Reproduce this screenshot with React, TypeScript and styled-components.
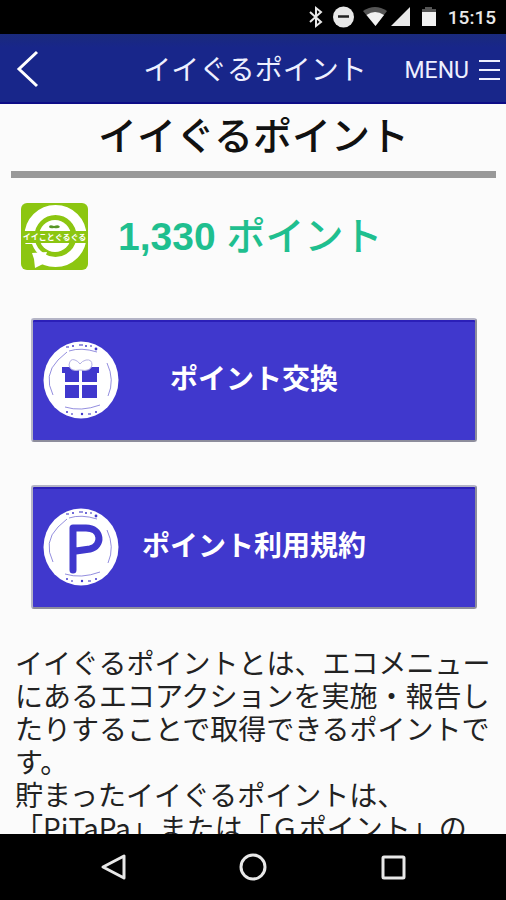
import React from "react";
import styled, { createGlobalStyle } from "styled-components";

const GlobalStyle = createGlobalStyle`
  *, *::before, *::after { box-sizing: border-box; }
  body {
    margin: 0;
    background: #fbfbfb;
    font-family: Roboto, "Noto Sans CJK JP", sans-serif;
  }
  button { font-family: inherit; cursor: pointer; }
`;

const Screen = styled.div`
  display: flex;
  flex-direction: column;
  height: 100vh;
  overflow: hidden;
`;

const StatusBar = styled.div`
  flex: none;
  display: flex;
  align-items: center;
  justify-content: flex-end;
  height: 34px;
  padding-right: 10px;
  background: #000;
  color: #e8e8e8;
  font-size: 19px;
  font-weight: 500;
`;

const StatusIcons = styled.svg`
  display: block;
  margin-right: 10px;
`;

const Header = styled.header`
  flex: none;
  display: grid;
  grid-template-columns: 1fr auto 1fr;
  align-items: center;
  height: 70px;
  padding: 2px 6px 0 10px;
  background: linear-gradient(#1a2a7c, #18268a 20%, #18268a);
  border-bottom: 2px solid #0c0c86;
  color: #fff;
`;

const HeaderTitle = styled.div`
  padding-top: 4px;
  font-size: 28px;
  line-height: 40px;
  color: #eef0ff;
`;

const BackButton = styled.button`
  display: flex;
  justify-self: start;
  padding: 0;
  border: 0;
  background: none;
`;

const MenuButton = styled.button`
  display: flex;
  align-items: center;
  justify-self: end;
  gap: 10px;
  padding: 2px 0 0;
  border: 0;
  background: none;
  color: #eef0ff;
  font-size: 23px;
`;

const Content = styled.main`
  flex: 1;
  min-height: 0;
  overflow: hidden;
  padding: 0 10px 0 11px;
  background: #fbfbfb;
`;

const PageTitle = styled.h1`
  margin: 0;
  padding: 9px 0 10px;
  border-bottom: 7px solid #999;
  color: #111;
  font-size: 39px;
  line-height: 48px;
  font-weight: 500;
  text-align: center;
`;

const Balance = styled.section`
  display: flex;
  align-items: center;
  gap: 30px;
  padding: 25px 10px 0;
`;

const Points = styled.p`
  margin: 0;
  color: #1fbf8f;
  font-family: "Liberation Sans", "Noto Sans CJK JP", sans-serif;
  font-size: 39px;
  line-height: 64px;
  font-weight: 700;
`;

const PointsUnit = styled.span`
  font-weight: 500;
`;

const Actions = styled.div`
  display: flex;
  flex-direction: column;
  gap: 43px;
  padding: 48px 19px 0 20px;
`;

const ActionButton = styled.button`
  display: grid;
  grid-template-columns: 1fr auto 1fr;
  align-items: center;
  height: 124px;
  padding: 0 10px;
  border: 2px solid;
  border-color: #b4b4c6 #8d8d9c #8d8d9c #b4b4c6;
  border-radius: 3px;
  background: #4038cd;
  box-shadow: inset 0 2px 0 #2b1fb8;
  color: #fff;
  font-size: 28px;
  line-height: 40px;
  font-weight: 700;
`;

const Description = styled.p`
  margin: 0;
  padding: 37px 0 0 4px;
  color: #222;
  font-family: "Noto Sans CJK JP", sans-serif;
  font-size: 28px;
  line-height: 33px;
  font-weight: 400;
`;

const NavBar = styled.nav`
  flex: none;
  display: flex;
  align-items: center;
  justify-content: center;
  gap: 100px;
  height: 66px;
  background: #000;
`;

const NavButton = styled.button`
  display: flex;
  padding: 5px;
  border: 0;
  background: none;
`;

function StatusGlyphs() {
  return (
    <StatusIcons width="130" height="24" viewBox="308 6 130 24" aria-hidden="true">
      <path d="M310 13l11 10-5 4V9l5 4-11 10" fill="none" stroke="#e8e8e8" strokeWidth="2" />
      <circle cx="343.500" cy="18" r="10.500" fill="#e8e8e8" />
      <path d="M338 17.500h11" stroke="#222" strokeWidth="2.500" />
      <path d="M363 12Q375 4 387 12L375.500 27Z" fill="#555" />
      <path d="M366.500 16Q375 10 384 16L375.500 27Z" fill="#f2f2f2" />
      <path d="M410 8v19h-19z" fill="#e8e8e8" />
      <path d="M425 8h7v2h4v5h-14v-5h3z" fill="#555" />
      <path d="M422 13h14v14h-14z" fill="#f2f2f2" />
    </StatusIcons>
  );
}

function EcoLogo() {
  return (
    <svg width="67" height="67" viewBox="0 0 67 67" role="img" aria-label="イイことぐるぐる">
      <rect width="67" height="67" rx="6" fill="#8cc611" />
      <circle cx="34.500" cy="33" r="26" fill="none" stroke="#fff" strokeWidth="10" />
      <circle cx="34" cy="33" r="16" fill="#fff" />
      <path d="M2 41h9q3 8 9 12l-9 8-9-8z" fill="#8cc611" />
      <path d="M11 50l15-1-2 6 3 4-7 3-6 3-1-9z" fill="#fff" />
      <rect y="28" width="67" height="12" fill="#8cc611" />
      <path d="M28 24q0-3 5-1 5-2 6 1-2 2-6 1-4 1-5-1z" fill="#579526" />
      <text
        x="33.500"
        y="37"
        textAnchor="middle"
        fontFamily="Noto Sans CJK JP, sans-serif"
        fontWeight="700"
        fontSize="8"
        fill="#fff"
      >
        イイことぐるぐる
      </text>
    </svg>
  );
}

function Medallion({ children }: { children: React.ReactNode }) {
  return (
    <svg width="76" height="78" viewBox="0 0 76 78" aria-hidden="true">
      <ellipse cx="38" cy="39" rx="37.500" ry="38.500" fill="#fff" />
      <g fill="none" stroke="#7771d6">
        <path d="M10 54Q0 34 15 19L24 11M64 22Q72 39 65 55M26 10Q38 6 54 11M22 66Q38 71 57 64" strokeWidth="0.800" />
        <path d="M23 6h3M36 4h4M47 5h2M28 73h2M45 73h3" strokeWidth="1.500" />
      </g>
      <g fill="#4038cd">
        <circle cx="30" cy="5" r="1" />
        <circle cx="43" cy="5" r="1" />
        <circle cx="53" cy="8" r="1.400" />
        <circle cx="24" cy="71" r="1" />
        <circle cx="39" cy="73" r="1.200" />
        <circle cx="53" cy="71" r="1" />
      </g>
      {children}
    </svg>
  );
}

function GiftIcon() {
  return (
    <Medallion>
      <g fill="#4038cd">
        <path d="M19 26h37v6h-2v9H39V27h-3v14H22v-9h-3z" />
        <path d="M22 44h14v13H22zM39 44h15v13H39z" />
      </g>
      <path
        d="M37 29Q27 31 26 24q1-7 6-5 3 1 5 4 2-3 6-4 6-1 6 5-1 7-12 5z"
        fill="#fff"
        stroke="#b5b2e5"
      />
    </Medallion>
  );
}

function PointIcon() {
  return (
    <Medallion>
      <path
        d="M30 62V20H43C59 20 60 38 47 41L33 43"
        fill="none"
        stroke="#4038cd"
        strokeWidth="7"
        strokeLinecap="round"
        strokeLinejoin="round"
      />
    </Medallion>
  );
}

export default function App() {
  return (
    <Screen lang="ja">
      <GlobalStyle />
      <StatusBar>
        <StatusGlyphs />
        <time>15:15</time>
      </StatusBar>
      <Header>
        <BackButton aria-label="戻る">
          <svg width="30" height="40" viewBox="0 0 30 40">
            <path d="M27 3L9 20l18 17" fill="none" stroke="#fff" strokeWidth="3" />
          </svg>
        </BackButton>
        <HeaderTitle>イイぐるポイント</HeaderTitle>
        <MenuButton>
          MENU
          <svg width="21" height="22" viewBox="0 0 21 22" aria-hidden="true">
            <path d="M0 2h21M0 11h21M0 20h21" stroke="#eef0ff" strokeWidth="2" />
          </svg>
        </MenuButton>
      </Header>
      <Content>
        <PageTitle>イイぐるポイント</PageTitle>
        <Balance>
          <EcoLogo />
          <Points>
            1,330 <PointsUnit>ポイント</PointsUnit>
          </Points>
        </Balance>
        <Actions>
          <ActionButton>
            <GiftIcon />
            ポイント交換
          </ActionButton>
          <ActionButton>
            <PointIcon />
            ポイント利用規約
          </ActionButton>
        </Actions>
        <Description>
          イイぐるポイントとは、エコメニューにあるエコアクションを実施・報告したりすることで取得できるポイントです。
          <br />
          貯まったイイぐるポイントは、
          <br />
          「PiTaPa」または「Ｇポイント」の
        </Description>
      </Content>
      <NavBar>
        <NavButton aria-label="戻る">
          <svg width="30" height="30" viewBox="0 0 30 30">
            <path d="M26 4v22L5 15z" fill="none" stroke="#e8e8e8" strokeWidth="3" strokeLinejoin="round" />
          </svg>
        </NavButton>
        <NavButton aria-label="ホーム">
          <svg width="30" height="30" viewBox="0 0 30 30">
            <circle cx="15" cy="15" r="12" fill="none" stroke="#e8e8e8" strokeWidth="3" />
          </svg>
        </NavButton>
        <NavButton aria-label="履歴">
          <svg width="30" height="30" viewBox="0 0 30 30">
            <rect x="5" y="5" width="21" height="21" rx="1" fill="none" stroke="#e8e8e8" strokeWidth="3" />
          </svg>
        </NavButton>
      </NavBar>
    </Screen>
  );
}
